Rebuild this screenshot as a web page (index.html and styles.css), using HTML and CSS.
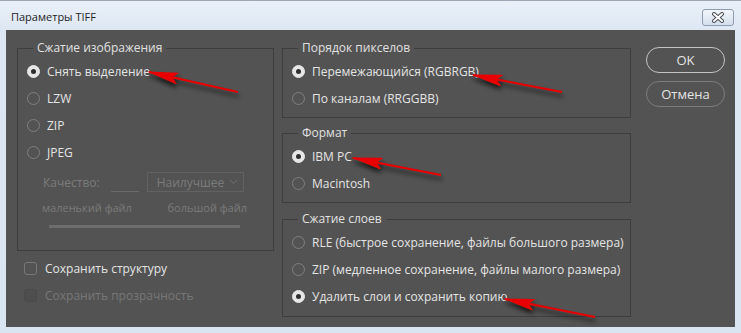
FILE: index.html
```html
<!DOCTYPE html>
<html lang="ru">
<head>
    <meta charset="UTF-8">
    <title>Параметры TIFF</title>
    <link rel="stylesheet" href="styles.css">
</head>
<body>
<div class="window">
    <div class="titlebar">
        <span class="title">Параметры TIFF</span>
        <div class="close-btn">
            <svg width="16" height="11" viewBox="0 0 16 11">
                <path d="M4 2 L12 9 M12 2 L4 9" stroke="#4a4f57" stroke-width="4" stroke-linecap="round"/>
                <path d="M4 2 L12 9 M12 2 L4 9" stroke="#fff" stroke-width="2" stroke-linecap="round"/>
            </svg>
        </div>
    </div>

    <div class="panel">
        <div class="col-left">
            <fieldset class="group group-image">
                <legend>Сжатие изображения</legend>
                <div class="opt"><span class="radio checked"></span>Снять выделение</div>
                <div class="opt"><span class="radio"></span>LZW</div>
                <div class="opt"><span class="radio"></span>ZIP</div>
                <div class="opt"><span class="radio"></span>JPEG</div>
                <div class="quality">
                    <span class="q-label">Качество:</span>
                    <span class="q-input"></span>
                    <span class="q-select">Наилучшее
                        <svg width="9" height="6" viewBox="0 0 9 6"><path d="M1 1 L4.5 4.5 L8 1" fill="none" stroke="#6f6f6f" stroke-width="1"/></svg>
                    </span>
                </div>
                <div class="q-scale">
                    <span>маленький файл</span>
                    <span>большой файл</span>
                </div>
                <div class="q-slider"></div>
            </fieldset>
            <div class="check"><span class="box"></span>Сохранить структуру</div>
            <div class="check disabled"><span class="box"></span>Сохранить прозрачность</div>
        </div>

        <div class="col-right">
            <fieldset class="group group-order">
                <legend>Порядок пикселов</legend>
                <div class="opt"><span class="radio checked"></span>Перемежающийся (RGBRGB)</div>
                <div class="opt"><span class="radio"></span>По каналам (RRGGBB)</div>
            </fieldset>
            <fieldset class="group group-format">
                <legend>Формат</legend>
                <div class="opt"><span class="radio checked"></span>IBM PC</div>
                <div class="opt"><span class="radio"></span>Macintosh</div>
            </fieldset>
            <fieldset class="group group-layers">
                <legend>Сжатие слоев</legend>
                <div class="opt"><span class="radio"></span>RLE (быстрое сохранение, файлы большого размера)</div>
                <div class="opt"><span class="radio"></span>ZIP (медленное сохранение, файлы малого размера)</div>
                <div class="opt"><span class="radio checked"></span>Удалить слои и сохранить копию</div>
            </fieldset>
        </div>

        <div class="col-buttons">
            <div class="btn btn-ok">OK</div>
            <div class="btn">Отмена</div>
        </div>
    </div>
</div>

<svg class="arrows" width="741" height="333" viewBox="0 0 741 333">
    <defs>
        <filter id="shadow" x="-20%" y="-50%" width="140%" height="250%">
            <feDropShadow dx="1" dy="4" stdDeviation="2.5" flood-color="#000" flood-opacity="0.75"/>
        </filter>
        <marker id="head" markerWidth="16" markerHeight="6" refX="15" refY="3" orient="auto" markerUnits="strokeWidth">
            <path d="M0 0 L16 3 L0 6 L3 3 z" fill="#e80000"/>
        </marker>
    </defs>
    <g filter="url(#shadow)" stroke="#e80000" stroke-width="2" marker-end="url(#head)">
        <line x1="238" y1="92" x2="149" y2="72"/>
        <line x1="562" y1="92" x2="473" y2="75"/>
        <line x1="441" y1="175" x2="353" y2="158"/>
        <line x1="595" y1="317" x2="505" y2="299"/>
    </g>
</svg>
</body>
</html>
```

FILE: styles.css
```css
* {
    box-sizing: border-box;
}
body {
    margin: 0;
    width: 741px;
    height: 333px;
    overflow: hidden;
    background: #dae5f2;
    font-family: "Open Sans", "Noto Sans", sans-serif;
    position: relative;
}
.window {
    height: 333px;
    border-top: 1px solid #9ba7b5;
    background: linear-gradient(180deg, #e9f0f8 0, #dde7f3 30px, #dae5f2 100%);
}
.titlebar {
    height: 29px;
    display: flex;
    align-items: center;
    justify-content: space-between;
    padding: 0 7px 0 11px;
}
.title {
    font-size: 11px;
    color: #1f1f1f;
    margin-top: 2px;
}
.close-btn {
    width: 32px;
    height: 17px;
    border: 1px solid #8e9cb0;
    border-radius: 3px;
    background: linear-gradient(180deg, #f2f6fb, #d4dfec);
    display: flex;
    align-items: center;
    justify-content: center;
    margin-top: 4px;
}
.panel {
    margin: 0 6px;
    height: 297px;
    background: #535353;
    display: flex;
    align-items: flex-start;
    padding: 10px 0 0 11px;
    color: #e4e4e4;
    font-size: 12px;
}
.group {
    margin: 0;
    padding: 2px 0 0 9px;
    border: 1px solid #3e3e3e;
    min-width: 0;
}
.group legend {
    margin-left: 6px;
    padding: 0 4px;
    font-size: 12px;
    line-height: 16px;
    color: #e0e0e0;
}
.col-left {
    width: 257px;
}
.group-image {
    height: 211px;
}
.opt {
    height: 27px;
    display: flex;
    align-items: center;
    gap: 7px;
    white-space: nowrap;
}
.radio {
    width: 13px;
    height: 13px;
    border-radius: 50%;
    border: 1px solid #7f7f7f;
    background: #535353;
    flex: none;
    position: relative;
}
.radio.checked {
    background: #e6e6e6;
    border-color: #e6e6e6;
}
.radio.checked::after {
    content: "";
    position: absolute;
    left: 3px;
    top: 3px;
    width: 5px;
    height: 5px;
    border-radius: 50%;
    background: #2e2e2e;
}
.quality {
    display: flex;
    align-items: center;
    height: 20px;
    margin: 6px 0 0 16px;
    color: #7b7b7b;
    font-size: 12px;
}
.q-input {
    width: 28px;
    height: 20px;
    border-bottom: 1px solid #6a6a6a;
    margin-left: 11px;
}
.q-select {
    width: 97px;
    height: 20px;
    margin-left: 8px;
    border: 1px solid #626262;
    display: flex;
    align-items: center;
    justify-content: space-between;
    padding: 0 5px 0 9px;
}
.q-scale {
    display: flex;
    justify-content: space-between;
    width: 205px;
    margin: 10px 0 0 15px;
    font-size: 11px;
    line-height: 12px;
    color: #7b7b7b;
}
.q-slider {
    width: 191px;
    height: 3px;
    margin: 11px 0 0 22px;
    background: #6d6d6d;
}
.check {
    height: 27px;
    display: flex;
    align-items: center;
    gap: 8px;
    padding-left: 7px;
}
.check:first-of-type {
    margin-top: 4px;
}
.box {
    width: 13px;
    height: 13px;
    border: 1px solid #777;
    border-radius: 3px;
}
.check.disabled {
    color: #777;
}
.check.disabled .box {
    border-color: #4a4a4a;
    background: #4e4e4e;
}
.col-right {
    width: 349px;
    margin-left: 8px;
}
.group-order {
    height: 78px;
}
.group-format {
    height: 78px;
    margin-top: 7px;
}
.group-layers {
    height: 106px;
    margin-top: 8px;
}
.col-buttons {
    width: 79px;
    margin: 7px 0 0 15px;
    display: flex;
    flex-direction: column;
    gap: 8px;
}
.btn {
    height: 26px;
    border: 1px solid #7c7c7c;
    border-radius: 13px;
    display: flex;
    align-items: center;
    justify-content: center;
    font-size: 13px;
    color: #e4e4e4;
}
.btn-ok {
    border: 1.5px solid #c4c4c4;
}
.arrows {
    position: absolute;
    left: 0;
    top: 0;
}
```
